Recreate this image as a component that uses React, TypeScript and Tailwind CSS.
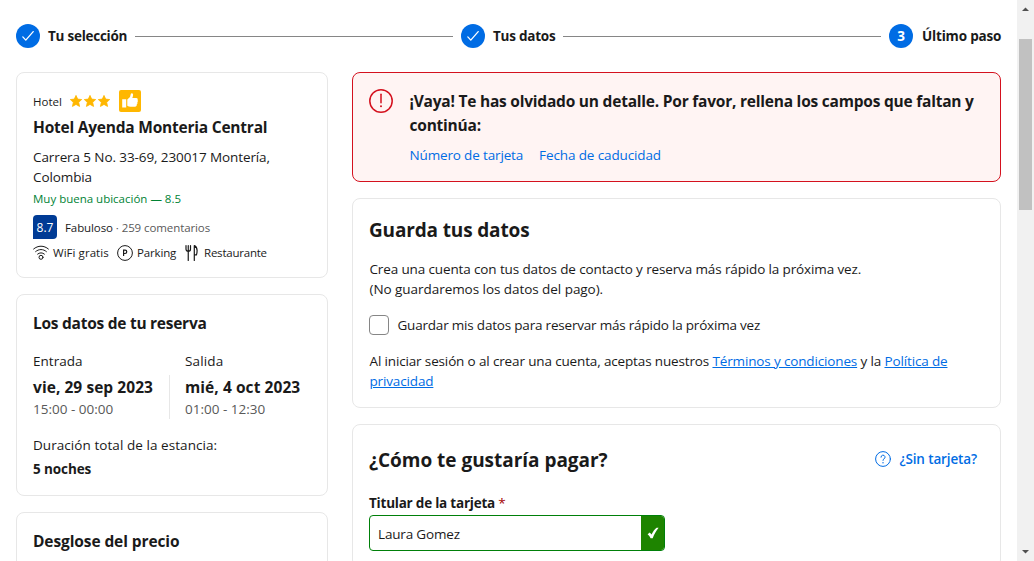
import React from "react";

const Check = () => (
  <span className="flex size-6 shrink-0 items-center justify-center rounded-full bg-[#006ce4]">
    <svg width="24" height="24" viewBox="0 0 24 24" fill="none" stroke="#fff" strokeWidth="1.3" strokeLinecap="round" strokeLinejoin="round">
      <path d="M6.8 12.9l3 3.200L17.200 7.600" />
    </svg>
  </span>
);

const Star = () => (
  <svg width="12" height="12" viewBox="0 0 24 24" fill="#ffb700" stroke="#ffb700" strokeWidth="1.600" strokeLinejoin="round">
    <path d="M12 .8l3.400 7.400 8 .9-6 5.500 1.700 8.300L12 18.800l-7.100 4.100 1.700-8.300L.6 9.100l8-.9z" />
  </svg>
);

const Wifi = () => (
  <svg className="shrink-0" width="16" height="16" viewBox="0 0 16 16" fill="none" stroke="#1a1a1a" strokeLinecap="round">
    <path d="M.6 4C5 .2 11 .2 15.400 4M2.600 6.600c3.200-2.800 7.600-2.800 10.800 0M4.600 9.100c2-1.700 4.800-1.700 6.800 0" />
    <circle cx="8" cy="12.300" r="2" />
  </svg>
);

const Parking = () => (
  <svg className="shrink-0" width="16" height="16" viewBox="0 0 16 16" fill="none" stroke="#1a1a1a">
    <circle cx="8" cy="8" r="7.400" />
    <path d="M6.600 11V5.200h1.500a1.600 1.600 0 0 1 0 3.300H6.600" strokeWidth="1.200" />
  </svg>
);

const Cutlery = () => (
  <svg className="shrink-0" width="16" height="16" viewBox="0 0 16 16" fill="none" stroke="#1a1a1a" strokeWidth="1.200" strokeLinecap="round" strokeLinejoin="round">
    <path d="M2 .6v3.600c0 1.300.9 2 2.200 2s2.300-.7 2.300-2V.6M4.250.6v14.800M10.300 15.400V.6c1.800.8 2.800 2.600 2.800 5 0 2-.2 3.200-.7 4.300h-2.100" />
  </svg>
);

const Card = ({ className = "", children }: { className?: string; children: React.ReactNode }) => (
  <section className={`rounded-lg border border-[#e7e7e7] p-4 ${className}`}>{children}</section>
);

const Link = ({ className = "", children }: { className?: string; children: React.ReactNode }) => (
  <a href="#" className={`text-[#006ce4] ${className}`}>{children}</a>
);

function Stepper() {
  return (
    <nav className="flex h-6 items-center text-[13.5px] leading-5 font-bold whitespace-nowrap">
      <Check />
      <span className="ml-2 w-[79px] tracking-[-0.25px]">Tu selección</span>
      <span className="mr-2 ml-2 h-px flex-1 bg-[#868686]" />
      <Check />
      <span className="ml-2 w-[62px] tracking-[-0.23px]">Tus datos</span>
      <span className="mr-2 ml-2 h-px flex-1 bg-[#868686]" />
      <span className="flex size-6 items-center justify-center rounded-full bg-[#006ce4] text-white">3</span>
      <span className="ml-2 w-20 pl-px tracking-[-0.18px]">Último paso</span>
    </nav>
  );
}

function Sidebar() {
  return (
    <aside className="flex w-[312px] shrink-0 flex-col gap-4">
      <Card className="h-[206px]">
        <div className="flex h-6 items-center text-[11.5px]">
          <span className="pt-px">Hotel</span>
          <span className="ml-2 flex gap-0.5"><Star /><Star /><Star /></span>
          <svg className="ml-[9px]" width="22" height="22" viewBox="0 0 22 22">
            <rect width="22" height="22" rx="2" fill="#ffb700" />
            <path fill="#fff" d="M3.200 9.200h4v8.200h-4zM8.300 9.600l2.700-2.500.8-3.200c.4-1.200 2.300-.8 2.300.8 0 1.200-.4 2.300-.8 3.200h3.900c1.400 0 2 1.300 1.300 2.200.6.7.5 1.700-.2 2.200.4.8.1 1.600-.5 2 .2 1.400-.6 2.400-1.900 2.400h-4.300c-1.200 0-2.200-.4-3.300-.9z" />
          </svg>
        </div>
        <h2 className="mt-0.5 text-[15.5px] leading-6 font-bold tracking-[-0.22px]">Hotel Ayenda Monteria Central</h2>
        <p className="mt-2 text-[13.5px] leading-5 tracking-[-0.1px]">Carrera 5 No. 33-69, 230017 Montería,<br />Colombia</p>
        <p className="mt-[3px] text-[11.5px] leading-[18px] text-[#008234]">Muy buena ubicación — 8.5</p>
        <div className="mt-[7px] flex h-6 items-center text-[11.5px]">
          <span className="flex size-6 items-center justify-center rounded-[4px] rounded-bl-none bg-[#003b95] pt-px text-xs font-medium text-white">8.7</span>
          <span className="ml-2 pt-px tracking-[-0.09px]">Fabuloso <span className="text-[#595959]">· 259 comentarios</span></span>
        </div>
        <div className="mt-[5px] flex h-[18px] items-center text-[11.5px] leading-[18px] whitespace-nowrap">
          <div className="flex w-[84px] items-center gap-1"><Wifi /><span className="tracking-[0.05px]">WiFi gratis</span></div>
          <div className="flex w-[67px] items-center gap-1"><Parking /><span className="tracking-[-0.15px]">Parking</span></div>
          <div className="flex items-center gap-1"><Cutlery /><span className="tracking-[-0.22px]">Restaurante</span></div>
        </div>
      </Card>

      <Card className="h-[202px]">
        <h2 className="text-[15.5px] leading-6 font-bold tracking-[-0.26px]">Los datos de tu reserva</h2>
        <div className="mt-4 flex">
          <div className="w-[152px]">
            <p className="text-[13.5px] leading-5 tracking-[0.03px]">Entrada</p>
            <div className="mt-1 mr-[15px] h-11 border-r border-[#e7e7e7]">
              <p className="text-[15.5px] leading-6 font-bold whitespace-nowrap tracking-[0.06px]">vie, 29 sep 2023</p>
              <p className="text-[13.5px] leading-5 text-[#595959]">15:00 - 00:00</p>
            </div>
          </div>
          <div>
            <p className="text-[13.5px] leading-5 tracking-[0.15px]">Salida</p>
            <p className="mt-1 text-[15.5px] leading-6 font-bold tracking-[0.07px]">mié, 4 oct 2023</p>
            <p className="text-[13.5px] leading-5 text-[#595959]">01:00 - 12:30</p>
          </div>
        </div>
        <p className="mt-4 text-[13.5px] leading-5 tracking-[0.06px]">Duración total de la estancia:</p>
        <p className="mt-1 text-[13.5px] leading-5 font-bold tracking-[-0.09px]">5 noches</p>
      </Card>

      <Card className="h-[202px]">
        <h2 className="text-[15.5px] leading-6 font-bold tracking-[-0.1px]">Desglose del precio</h2>
      </Card>
    </aside>
  );
}

function Main() {
  return (
    <main className="flex min-w-0 flex-1 flex-col gap-4">
      <section className="flex h-[110px] gap-4 rounded-lg border border-[#d4111e] bg-[#fff4f3] p-4">
        <svg className="shrink-0" width="24" height="24" viewBox="0 0 24 24" fill="none" stroke="#d4111e" strokeWidth="1.500" strokeLinecap="round">
          <circle cx="12" cy="12" r="11.200" />
          <path d="M12 5.300v8.400" />
          <circle cx="12" cy="17.300" r="1" fill="#d4111e" stroke="none" />
        </svg>
        <div className="pl-[0.5px]">
          <p className="text-[15.5px] leading-6 font-bold whitespace-nowrap tracking-[-0.22px]">
            ¡Vaya! Te has olvidado un detalle. Por favor, rellena los campos que faltan y<br />continúa:
          </p>
          <p className="mt-2 flex gap-4 text-[13.5px] leading-5">
            <Link className="tracking-[-0.15px]">Número de tarjeta</Link>
            <Link className="tracking-[-0.12px]">Fecha de caducidad</Link>
          </p>
        </div>
      </section>

      <Card className="h-[210px] text-[13.5px] leading-5">
        <h2 className="pt-px text-[19px] leading-[29px] font-bold tracking-[-0.15px]">Guarda tus datos</h2>
        <p className="mt-3.5 pl-[0.5px] tracking-[-0.13px]">
          Crea una cuenta con tus datos de contacto y reserva más rápido la próxima vez.<br />
          <span className="tracking-[-0.05px]">(No guardaremos los datos del pago).</span>
        </p>
        <label className="mt-4 flex items-center gap-2">
          <span className="size-5 rounded-[4px] border border-[#868686] bg-white" />
          <span className="pl-[0.5px] tracking-[-0.2px]">Guardar mis datos para reservar más rápido la próxima vez</span>
        </label>
        <p className="mt-4 pl-[0.5px] tracking-[-0.145px]">
          Al iniciar sesión o al crear una cuenta, aceptas nuestros <Link className="underline">Términos y condiciones</Link> y la{" "}
          <Link className="underline">Política de<br />privacidad</Link>
        </p>
      </Card>

      <Card className="h-[300px] text-[13.5px] leading-5">
        <div className="mt-1 flex items-start justify-between pr-[7px]">
          <h2 className="pt-px text-[19px] leading-[29px] font-bold tracking-[-0.03px]">¿Cómo te gustaría pagar?</h2>
          <Link className="mt-1 flex items-center gap-2 font-semibold tracking-[-0.13px]">
            <svg width="16" height="16" viewBox="0 0 16 16" fill="none" stroke="#006ce4" strokeLinecap="round">
              <circle cx="8" cy="8" r="7.400" />
              <path d="M6 6.200a2 2 0 1 1 3 1.700c-.7.400-1 .8-1 1.500" />
              <circle cx="8" cy="11.700" r=".7" fill="#006ce4" stroke="none" />
            </svg>
            ¿Sin tarjeta?
          </Link>
        </div>
        <p className="mt-[18px] font-bold tracking-[-0.22px]">Titular de la tarjeta <span className="font-normal text-[#a30000]">*</span></p>
        <div className="mt-0.5 flex h-9 w-[296px] overflow-hidden rounded-[4px] border border-[#008009]">
          <span className="flex-1 pt-2 pl-2 tracking-[-0.17px]">Laura Gomez</span>
          <span className="flex w-[23px] items-center justify-center bg-[#1e8400] text-white">
            <svg width="12" height="12" viewBox="0 0 12 12" fill="#fff">
              <path d="M.6 7.200L2.800 5.500l1.700 2.100C6 4.600 7.600 2.200 9.600.8h2C9 3.900 7.300 7.300 5.700 11.200H3.600C2.800 9.600 1.900 8.400.6 7.200z" />
            </svg>
          </span>
        </div>
      </Card>
    </main>
  );
}

export default function App() {
  return (
    <div className="flex h-[561px] overflow-hidden bg-white font-['Open_Sans',sans-serif] text-[#1a1a1a]">
      <div className="flex min-w-0 flex-1 flex-col px-4 pt-6">
        <Stepper />
        <div className="mt-6 flex min-h-0 flex-1 gap-6">
          <Sidebar />
          <Main />
        </div>
      </div>
      <div className="flex w-[17px] shrink-0 flex-col items-center bg-[#f1f1f1]">
        <svg width="17" height="17" viewBox="0 0 17 17" fill="#505050"><path d="M5 11h7L8.500 7.500z" /></svg>
        <div className="mt-[22px] h-[171px] w-[13px] bg-[#c1c1c1]" />
        <svg className="mt-auto" width="17" height="17" viewBox="0 0 17 17" fill="#505050"><path d="M5 6h7L8.500 9.500z" /></svg>
      </div>
    </div>
  );
}
